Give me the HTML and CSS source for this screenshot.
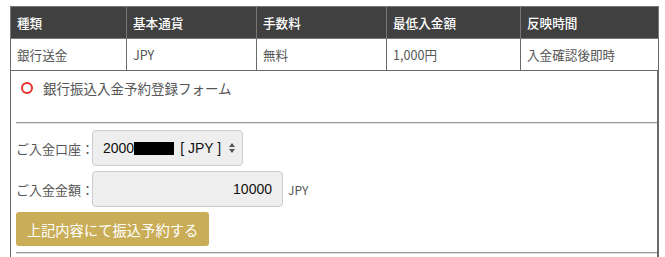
FILE: index.html
```html
<!DOCTYPE html>
<html lang="ja">
<head>
<meta charset="utf-8">
<link rel="stylesheet" href="styles.css">
</head>
<body>
<div class="wrap">
  <table class="info">
    <thead>
      <tr>
        <th class="c1">種類</th>
        <th class="c2">基本通貨</th>
        <th class="c3">手数料</th>
        <th class="c4">最低入金額</th>
        <th class="c5">反映時間</th>
      </tr>
    </thead>
    <tbody>
      <tr>
        <td>銀行送金</td>
        <td>JPY</td>
        <td>無料</td>
        <td>1,000円</td>
        <td>入金確認後即時</td>
      </tr>
    </tbody>
  </table>
  <div class="form">
    <div class="title">
      <span class="ring"></span>
      <span class="title-text">銀行振込入金予約登録フォーム</span>
    </div>
    <div class="rule"></div>
    <div class="row first">
      <span class="label">ご入金口座：</span>
      <div class="select">
        <span class="val">2000</span><span class="redact"></span><span class="val">[ JPY ]</span>
        <svg class="arrows" width="8" height="12" viewBox="0 0 8 12"><path d="M4 1 L7 5 L1 5 Z M4 11 L7 7 L1 7 Z" fill="#555"/></svg>
      </div>
    </div>
    <div class="row">
      <span class="label">ご入金金額：</span>
      <div class="input">10000</div>
      <span class="unit">JPY</span>
    </div>
    <div class="row">
      <button class="btn">上記内容にて振込予約する</button>
    </div>
    <div class="rule bottom"></div>
  </div>
</div>
</body>
</html>
```
FILE: styles.css
```css
html, body {
  margin: 0;
  padding: 0;
  background: #fff;
}
body {
  font-family: "Noto Sans CJK JP", "Noto Sans", sans-serif;
  color: #555;
}
.wrap {
  padding: 6px 0 0 10px;
  width: 649px;
}
.info {
  border-collapse: collapse;
  width: 649px;
  table-layout: fixed;
  font-size: 12.6px;
}
.info th, .info td {
  text-align: left;
  padding: 0 0 0 6px;
  height: 31px;
  border: 1px solid #6a6a6a;
  line-height: 16px;
  white-space: nowrap;
}
.info th {
  background: #404040;
  color: #fff;
  font-weight: 500;
  border-color: #777;
}
.info td {
  color: #555;
}
.c1 { width: 109px; }
.c2 { width: 123px; }
.c3 { width: 123px; }
.c4 { width: 127px; }
.form {
  border-left: 1px solid #6a6a6a;
  border-right: 2px solid #6a6a6a;
  padding: 0 0 0 5px;
  height: 190px;
}
.title {
  display: flex;
  align-items: center;
  height: 34px;
  padding-left: 5px;
}
.ring {
  width: 8px;
  height: 8px;
  border: 2px solid #e0322a;
  border-radius: 50%;
  margin-right: 10px;
}
.title-text {
  font-size: 13.5px;
  color: #555;
}
.rule {
  margin-top: 17px;
  border-top: 1px solid #999;
  border-bottom: 1px solid #e2e2e2;
}
.rule.bottom {
  margin-top: 6px;
}
.row {
  display: flex;
  align-items: center;
  margin-top: 5px;
}
.row.first {
  margin-top: 6px;
}
.label {
  width: 76px;
  font-size: 13px;
  white-space: nowrap;
  color: #555;
}
.select {
  box-sizing: border-box;
  width: 151px;
  height: 36px;
  background: #eee;
  border: 1px solid #ccc;
  border-radius: 4px;
  display: flex;
  align-items: center;
  padding-left: 10px;
  font-family: "Liberation Sans", Arial, sans-serif;
  font-size: 14px;
  color: #111;
  position: relative;
}
.redact {
  display: inline-block;
  width: 40px;
  height: 13px;
  background: #000;
  margin: 0 6px 0 0;
}
.arrows {
  position: absolute;
  right: 6px;
  top: 11px;
}
.input {
  box-sizing: border-box;
  width: 191px;
  height: 36px;
  background: #eee;
  border: 1px solid #ccc;
  border-radius: 4px;
  display: flex;
  align-items: center;
  justify-content: flex-end;
  padding-right: 10px;
  font-family: "Liberation Sans", Arial, sans-serif;
  font-size: 14px;
  color: #111;
}
.unit {
  margin-left: 5px;
  font-size: 12px;
  color: #555;
}
.btn {
  box-sizing: border-box;
  width: 193px;
  height: 34px;
  border: none;
  border-radius: 3px;
  background: #c9ad57;
  color: #fff;
  font-family: "Noto Sans CJK JP", "Noto Sans", sans-serif;
  font-size: 14.3px;
  padding: 0;
  text-align: center;
}
```
